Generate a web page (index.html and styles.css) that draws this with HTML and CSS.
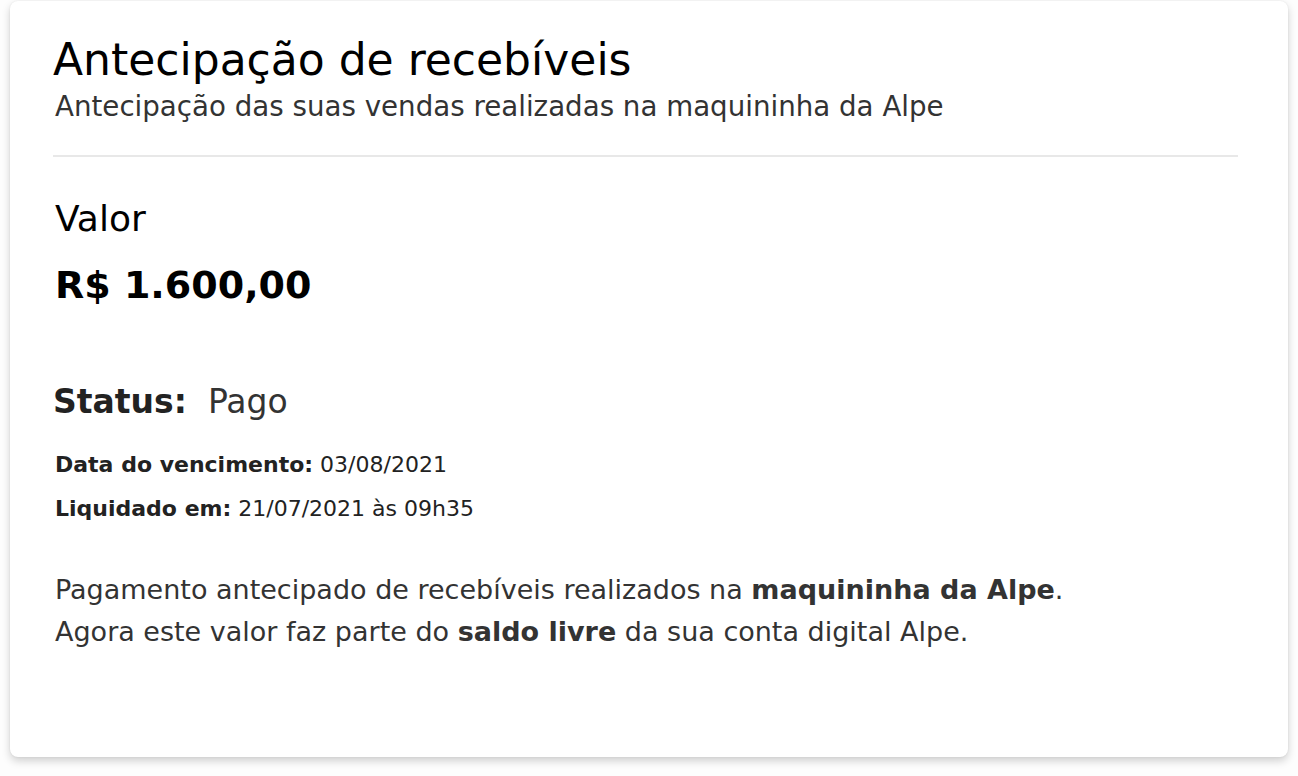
FILE: index.html
```html
<!DOCTYPE html>
<html lang="pt-BR">
<head>
<meta charset="utf-8">
<title>Antecipação de recebíveis</title>
<link rel="stylesheet" href="styles.css">
</head>
<body>
<main class="card">
  <header class="card-header">
    <h1 class="title">Antecipação de recebíveis</h1>
    <p class="subtitle">Antecipação das suas vendas realizadas na maquininha da Alpe</p>
  </header>
  <section class="value">
    <p class="value-label">Valor</p>
    <p class="value-amount">R$ 1.600,00</p>
  </section>
  <section class="status">
    <p class="status-line"><strong>Status:</strong>&nbsp; Pago</p>
    <p class="meta meta-first"><strong>Data do vencimento:</strong> 03/08/2021</p>
    <p class="meta"><strong>Liquidado em:</strong> 21/07/2021 às 09h35</p>
  </section>
  <p class="description">Pagamento antecipado de recebíveis realizados na <strong>maquininha da Alpe</strong>.<br>Agora este valor faz parte do <strong>saldo livre</strong> da sua conta digital Alpe.</p>
</main>
</body>
</html>
```
FILE: styles.css
```css
* { box-sizing: border-box; }
html, body { margin: 0; padding: 0; background: #fdfdfd; }
body {
  font-family: "DejaVu Sans", "Noto Sans", sans-serif;
  color: #333;
  padding: 1px 10px 0 10px;
  height: 776px;
}
.card {
  width: 1278px;
  height: 756px;
  background: #fff;
  border-radius: 8px;
  box-shadow: 0 4px 8px rgba(0,0,0,0.18), 0 0 2px rgba(0,0,0,0.08);
  padding: 33px 50px 0 43px;
}
p, h1 { margin: 0; }
.card-header {
  border-bottom: 2px solid #e8e8e8;
  padding-bottom: 30px;
}
.title {
  font-weight: 400;
  font-size: 44px;
  line-height: 52px;
  color: #000;
}
.subtitle {
  font-size: 27.7px;
  line-height: 36px;
  color: #333;
  padding-left: 2px;
  margin-top: 3px;
}
.value { padding: 40px 2px 0; }
.value-label { font-size: 36px; line-height: 44px; color: #000; }
.value-amount { font-size: 38px; line-height: 48px; font-weight: 700; color: #000; margin-top: 20px; }
.status { padding-top: 71px; }
.status-line { font-size: 33px; line-height: 44px; color: #333; }
.status-line strong { color: #222; }
.meta { font-size: 22px; line-height: 26px; color: #222; margin-top: 18px; padding-left: 2px; }
.meta-first { margin-top: 28px; }
.meta strong { font-weight: 700; }
.description { font-size: 27px; line-height: 42px; color: #333; margin-top: 47px; padding-left: 2px; }
.description strong { color: #333; }
```
